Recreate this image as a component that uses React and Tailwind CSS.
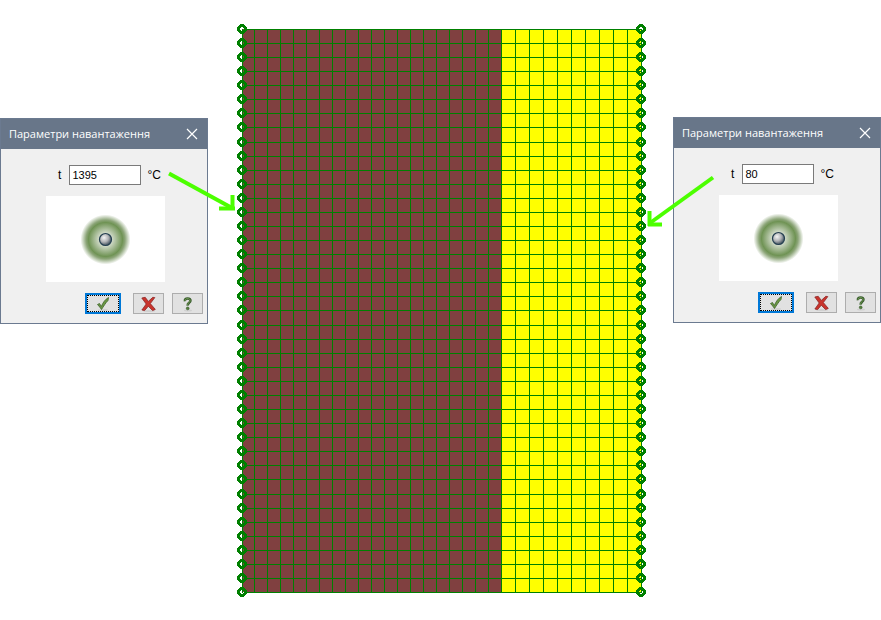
import React from "react";

const GREEN = "#008000";
const rows = Array.from(
  { length: 41 },
  (_, i) => 29 + 14 * i + [8, 21, 33].filter((step) => i >= step).length
);
const brownCols = Array.from({ length: 20 }, (_, i) => 241 + 13 * i);
const yellowCols = Array.from({ length: 11 }, (_, i) => 501 + 14 * i);

function Mesh() {
  return (
    <svg className="block h-[620px] w-[410px] shrink-0" viewBox="236 0 410 620" role="img" aria-label="Mesh">
      <g shapeRendering="crispEdges">
        <rect x="242" y="29" width="259" height="563" fill="#804040" />
        <rect x="501" y="29" width="140" height="563" fill="#ffff00" />
        {rows.map((y) => (
          <rect key={y} x="245" y={y} width="396" height="1" fill={GREEN} />
        ))}
        {brownCols.map((x, i) => (
          <rect key={x} x={i ? x : 242} y="29" width="1" height="564" fill={GREEN} />
        ))}
        {yellowCols.map((x) => (
          <rect key={x} x={x} y="29" width="1" height="564" fill={GREEN} />
        ))}
        {rows.map((y) => (
          <g key={y} fill="none" stroke={GREEN} strokeWidth="3">
            <circle cx="242" cy={y} r="3.4" />
            <circle cx="641" cy={y} r="3.4" />
          </g>
        ))}
      </g>
    </svg>
  );
}

function Preview({ id }) {
  return (
    <svg className="h-[86px] w-[119px] bg-white" viewBox="0 0 119 86" aria-hidden="true">
      <defs>
        <radialGradient id={`halo-${id}`}>
          <stop offset="0" stopColor="#ffffff" />
          <stop offset="0.25" stopColor="#d2dbca" />
          <stop offset="0.68" stopColor="#6f9354" />
          <stop offset="0.78" stopColor="#8ca578" />
          <stop offset="1" stopColor="#ffffff" />
        </radialGradient>
        <radialGradient id={`ball-${id}`} cx="0.38" cy="0.35" r="0.6">
          <stop offset="0" stopColor="#f5f5f5" />
          <stop offset="0.6" stopColor="#b0b2b5" />
          <stop offset="1" stopColor="#56636e" />
        </radialGradient>
      </defs>
      <circle cx="59.5" cy="43.5" r="25" fill={`url(#halo-${id})`} />
      <circle cx="59.5" cy="43.5" r="6" fill={`url(#ball-${id})`} stroke="#243f50" strokeWidth="1.2" />
    </svg>
  );
}

function CheckIcon() {
  return (
    <svg className="h-4 w-4" viewBox="0 0 16 16" aria-hidden="true">
      <ellipse cx="8" cy="14" rx="5" ry="1" fill="#d0d0d0" />
      <path d="M2.5 8.500 4.500 7.500 6.300 10.500C8 6.500 10 3.500 13.500 1.500L13 4.500C10.500 7 8.500 10.500 6.500 13.500 5.500 12 4 10 2.500 8.500Z" fill="#6b9644" stroke="#3c642b" strokeWidth="0.8" />
    </svg>
  );
}

function CrossIcon() {
  return (
    <svg className="h-4 w-4" viewBox="0 0 16 16" aria-hidden="true">
      <ellipse cx="8" cy="15" rx="6" ry="1" fill="#d0d0d0" />
      <path d="M0.8 2 4.200 1.300 7.300 5.400 11.800 1.300 13.800 1.600 9.300 7.600 14.300 13.400 11.600 14.600 7.300 10.200 3.600 14.600 0.900 14 5.200 8Z" fill="#c9342c" stroke="#8d2525" strokeWidth="0.8" />
    </svg>
  );
}

function HelpIcon() {
  return (
    <svg className="h-4 w-4" viewBox="0 0 16 16" aria-hidden="true">
      <ellipse cx="8" cy="14.5" rx="4" ry="1" fill="#d0d0d0" />
      <path d="M5 5.200C4.500 2.800 6 2.500 7.700 2.500 11.200 2.500 11 5.800 9 6.900 8 7.600 7.600 8.200 7.700 9.600" fill="none" stroke="#35592a" strokeWidth="2.6" />
      <path d="M5.200 4.900C4.800 3 6.200 2.600 7.700 2.600 10.800 2.600 10.600 5.600 8.800 6.700 7.800 7.500 7.600 8 7.700 9.300" fill="none" stroke="#7ba35c" strokeWidth="1" />
      <circle cx="7.700" cy="12.400" r="1.400" fill="#55803c" stroke="#35592a" strokeWidth="0.6" />
    </svg>
  );
}

function LoadDialog({ id, value }) {
  return (
    <section
      role="dialog"
      aria-labelledby={`title-${id}`}
      className="flex w-[208px] shrink-0 flex-col border border-[#6b7a90] bg-[#f0f0f0] text-black"
    >
      <header className="flex h-[30px] items-center justify-between bg-[#687689] pr-[7px] pl-2 text-white">
        <h2 id={`title-${id}`} className="font-['Open_Sans','Noto_Sans',sans-serif] text-[11px] leading-4">
          Параметри навантаження
        </h2>
        <button type="button" aria-label="Close" className="flex h-4 w-4 items-center justify-center">
          <svg className="h-3 w-3" viewBox="0 0 12 12" aria-hidden="true">
            <path d="M1 1 11 11M11 1 1 11" stroke="white" strokeWidth="1.2" />
          </svg>
        </button>
      </header>
      <div className="flex flex-col items-center pt-4 pl-[3px]">
        <div className="ml-2 flex items-center text-[12px] leading-4">
          <label htmlFor={`t-${id}`}>t</label>
          <input
            id={`t-${id}`}
            defaultValue={value}
            className="mr-1.5 ml-2 h-5 w-[72px] border border-[#7a7a7a] bg-white px-[2px] text-[11px] leading-4 outline-none"
          />
          <span>°C</span>
        </div>
        <div className="mt-[11px]">
          <Preview id={id} />
        </div>
      </div>
      <footer className="mt-[11px] mr-1 mb-[9px] flex items-center justify-end gap-2">
        <button
          type="button"
          aria-label="OK"
          className="mr-1 h-[21px] w-9 border-2 border-[#0078d7] bg-[#e1e1e1]"
        >
          <span className="flex h-full items-center justify-center border border-dotted border-black">
            <CheckIcon />
          </span>
        </button>
        <button type="button" aria-label="Cancel" className="flex h-[21px] w-[31px] items-center justify-center border border-[#adadad] bg-[#e1e1e1]">
          <CrossIcon />
        </button>
        <button type="button" aria-label="Help" className="flex h-[21px] w-[31px] items-center justify-center border border-[#adadad] bg-[#e1e1e1]">
          <HelpIcon />
        </button>
      </footer>
    </section>
  );
}

export default function App() {
  return (
    <main className="relative flex items-start justify-between bg-white font-['Liberation_Sans',Arial,sans-serif]">
      <div className="pt-[118px]">
        <LoadDialog id="left" value="1395" />
      </div>
      <Mesh />
      <div className="pt-[117px]">
        <LoadDialog id="right" value="80" />
      </div>
      <svg className="pointer-events-none absolute top-0 left-0 h-[620px] w-[881px]" viewBox="0 0 881 620" aria-hidden="true">
        <g fill="none" stroke="#4cff00">
          <path d="M169 173.500 233 208.500" strokeWidth="4" />
          <path d="M219 208.500H235M232.500 195V210" strokeWidth="4" />
          <path d="M713 177.500 650 223" strokeWidth="4" />
          <path d="M649.500 211V226M648 224.500H662" strokeWidth="4" />
        </g>
      </svg>
    </main>
  );
}
